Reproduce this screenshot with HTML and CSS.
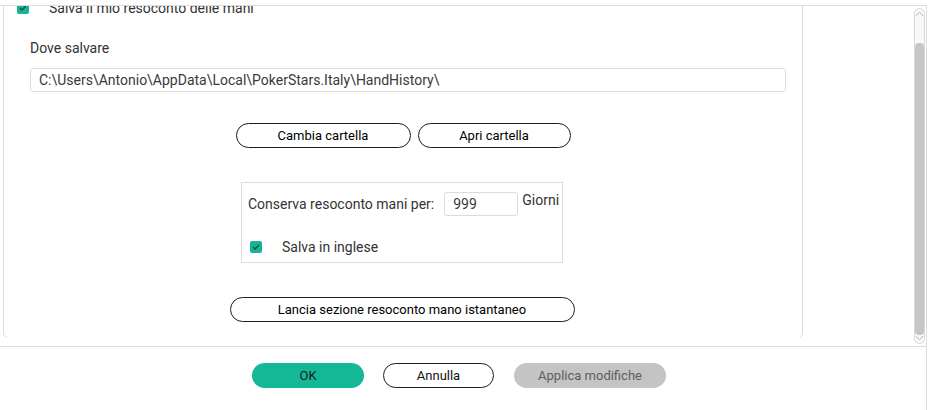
FILE: index.html
```html
<!DOCTYPE html>
<html lang="it">
<head>
    <meta charset="UTF-8">
    <meta name="viewport" content="width=device-width, initial-scale=1.0">
    <title>Opzioni resoconto mani</title>
    <link rel="stylesheet" href="styles.css">
</head>
<body>
    <div class="window">
        <div class="main">
            <div class="scroll-view">
                <div class="panel">
                    <label class="check-row top-check">
                        <span class="checkbox">
                            <svg width="8" height="6" viewBox="0 0 8 6"><path d="M1 3l2 2 4-4" fill="none" stroke="#1d4d44" stroke-width="1.4"/></svg>
                        </span>
                        <span>Salva il mio resoconto delle mani</span>
                    </label>

                    <div class="field-label">Dove salvare</div>
                    <div class="path-box">C:\Users\Antonio\AppData\Local\PokerStars.Italy\HandHistory\</div>

                    <div class="folder-btns">
                        <button class="pill change-btn">Cambia cartella</button>
                        <button class="pill open-btn">Apri cartella</button>
                    </div>

                    <div class="keep-box">
                        <div class="keep-row">
                            <span class="keep-label">Conserva resoconto mani per:</span>
                            <span class="days-input">999</span>
                            <span class="days-unit">Giorni</span>
                        </div>
                        <label class="check-row english-check">
                            <span class="checkbox">
                                <svg width="8" height="6" viewBox="0 0 8 6"><path d="M1 3l2 2 4-4" fill="none" stroke="#1d4d44" stroke-width="1.4"/></svg>
                            </span>
                            <span>Salva in inglese</span>
                        </label>
                    </div>

                    <button class="pill launch-btn">Lancia sezione resoconto mano istantaneo</button>
                </div>
            </div>

            <div class="scrollbar">
                <svg class="arrow" width="9" height="6" viewBox="0 0 9 6"><path d="M1 5l3.5-4 3.5 4" fill="none" stroke="#b5b5b5" stroke-width="1"/></svg>
                <div class="thumb"></div>
                <svg class="arrow down" width="9" height="6" viewBox="0 0 9 6"><path d="M1 1l3.5 4 3.5-4" fill="none" stroke="#b5b5b5" stroke-width="1"/></svg>
            </div>
        </div>

        <div class="footer">
            <button class="foot-btn ok-btn">OK</button>
            <button class="foot-btn cancel-btn">Annulla</button>
            <button class="foot-btn apply-btn">Applica modifiche</button>
        </div>
    </div>
</body>
</html>
```

FILE: styles.css
```css
body {
    margin: 0;
    background: #fff;
    font-family: Roboto, "Liberation Sans", sans-serif;
    color: #333;
}

.window {
    margin-top: 5px;
    width: 926px;
    height: 405px;
    border-top: 1px solid #dcdcdc;
    border-right: 1px solid #dcdcdc;
}

.main {
    display: flex;
    height: 340px;
}

.scroll-view {
    margin-left: 3px;
    width: 800px;
    height: 331px;
    overflow: hidden;
}

.panel {
    margin-top: -17px;
    padding: 10px 16px 15px 26px;
    border: 1px solid #dcdcdc;
    border-radius: 0 0 5px 5px;
    display: flex;
    flex-direction: column;
}

.check-row {
    display: flex;
    align-items: center;
    height: 16px;
    font-size: 14px;
    line-height: 16px;
    color: #333;
}

.checkbox {
    width: 12px;
    height: 12px;
    border-radius: 2px;
    background: #17b395;
    display: flex;
    align-items: center;
    justify-content: center;
    margin-right: 20px;
}

.top-check {
    margin-left: -13px;
}

.field-label {
    margin-top: 24px;
    font-size: 14px;
    line-height: 16px;
}

.path-box {
    margin-top: 12px;
    height: 22px;
    border: 1px solid #dcdcdc;
    border-radius: 3px;
    padding-left: 8px;
    font-size: 14px;
    line-height: 22px;
    color: #3a3a3a;
}

.pill {
    height: 25px;
    border: 1px solid #1e1e1e;
    border-radius: 13px;
    background: #fff;
    font-family: Roboto, "Liberation Sans", sans-serif;
    font-size: 13px;
    font-weight: 400;
    color: #000;
    padding: 0;
    cursor: pointer;
}

.folder-btns {
    margin-top: 31px;
    display: flex;
    justify-content: center;
    gap: 7px;
    padding-right: 10px;
}

.change-btn { width: 175px; }
.open-btn { width: 153px; }

.keep-box {
    margin: 34px auto 0;
    border: 1px solid #dcdcdc;
    padding: 9px 0 7px 6px;
    width: 314px;
    position: relative;
    left: -6px;
}

.keep-row {
    display: flex;
    align-items: flex-start;
    font-size: 14px;
    line-height: 16px;
}

.keep-label {
    align-self: center;
    margin-right: 10px;
}

.days-input {
    width: 64px;
    height: 22px;
    border: 1px solid #dcdcdc;
    border-radius: 3px;
    padding-left: 8px;
    line-height: 22px;
    color: #3a3a3a;
}

.days-unit {
    margin-left: 4px;
    line-height: 16px;
}

.english-check {
    margin-top: 23px;
    margin-left: 2px;
}

.launch-btn {
    margin: 34px auto 0;
    width: 345px;
    position: relative;
    left: -6px;
}

.scrollbar {
    margin: 2px 1px 0 auto;
    width: 9px;
    height: 334px;
    border: 1px solid #d8d8d8;
    border-radius: 6px;
    background: #f8f8f8;
    display: flex;
    flex-direction: column;
    align-items: center;
}

.arrow {
    margin-top: 2px;
}

.arrow.down {
    margin-top: auto;
    margin-bottom: 2px;
}

.thumb {
    margin-top: 26px;
    width: 9px;
    height: 293px;
    border-radius: 4px;
    background: #c6c6c6;
}

.footer {
    border-top: 1px solid #dcdcdc;
    padding: 16px 8px 0 0;
    display: flex;
    justify-content: center;
    gap: 19px;
}

.foot-btn {
    height: 25px;
    border-radius: 13px;
    font-family: Roboto, "Liberation Sans", sans-serif;
    font-size: 13px;
    padding: 0;
    cursor: pointer;
}

.ok-btn {
    width: 112px;
    border: none;
    background: #14b896;
    color: #1a1a1a;
}

.cancel-btn {
    width: 111px;
    border: 1px solid #1e1e1e;
    background: #fff;
    color: #111;
}

.apply-btn {
    width: 152px;
    border: none;
    background: #c4c4c4;
    color: #5e5e5e;
    margin-left: 1px;
}
```
